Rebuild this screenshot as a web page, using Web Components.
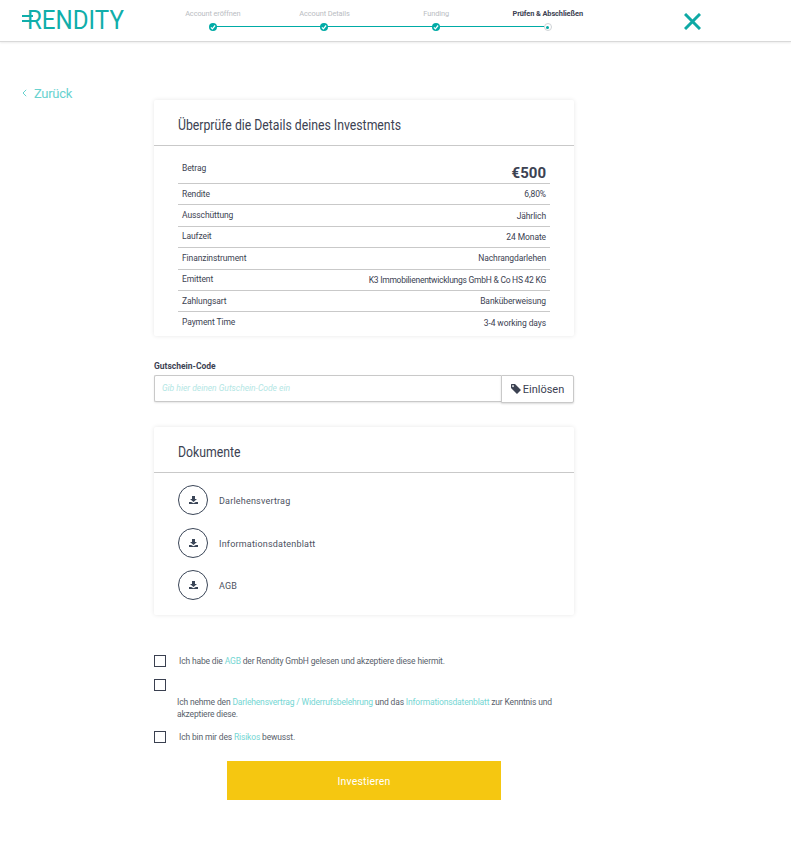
<!DOCTYPE html>
<html lang="de"><head><meta charset="utf-8"><title>Rendity</title>
<style>
html,body{margin:0;padding:0;background:#fff}
body{font-family:Roboto,"Liberation Sans",sans-serif;color:#3c4252;height:842px;overflow:hidden}
</style></head><body>
<rd-header></rd-header>
<rd-main>
  <rd-back>Zurück</rd-back>
  <rd-card heading="Überprüfe die Details deines Investments" pad="table">
    <rd-row label="Betrag" value="€500" big></rd-row>
    <rd-row label="Rendite" value="6,80%"></rd-row>
    <rd-row label="Ausschüttung" value="Jährlich"></rd-row>
    <rd-row label="Laufzeit" value="24 Monate"></rd-row>
    <rd-row label="Finanzinstrument" value="Nachrangdarlehen"></rd-row>
    <rd-row label="Emittent" value="K3 Immobilienentwicklungs GmbH &amp; Co HS 42 KG" tight></rd-row>
    <rd-row label="Zahlungsart" value="Banküberweisung"></rd-row>
    <rd-row label="Payment Time" value="3-4 working days" last></rd-row>
  </rd-card>
  <rd-coupon></rd-coupon>
  <rd-card heading="Dokumente" pad="docs">
    <rd-doc>Darlehensvertrag</rd-doc>
    <rd-doc>Informationsdatenblatt</rd-doc>
    <rd-doc>AGB</rd-doc>
  </rd-card>
  <rd-checks>
    <rd-check>Ich habe die <a>AGB</a> der Rendity GmbH gelesen und akzeptiere diese hiermit.</rd-check>
    <rd-check below>Ich nehme den <a>Darlehensvertrag / Widerrufsbelehrung</a> und das <a>Informationsdatenblatt</a> zur Kenntnis und<br>akzeptiere diese.</rd-check>
    <rd-check>Ich bin mir des <a>Risikos</a> bewusst.</rd-check>
  </rd-checks>
  <rd-cta>Investieren</rd-cta>
</rd-main>
<script>
function def(name, css, html){
  customElements.define(name, class extends HTMLElement{
    connectedCallback(){
      if(this.shadowRoot) return;
      const r=this.attachShadow({mode:'open'});
      r.innerHTML='<style>'+css+'</style>'+(typeof html==='function'?html(this):html);
    }
  });
}
const check='<svg width="6" height="6" viewBox="0 0 10 10"><path d="M1.5 5.5 4 8 8.5 2.5" fill="none" stroke="#fff" stroke-width="2"/></svg>';
def('rd-step',`
:host{display:flex;flex-direction:column;align-items:center;width:111.67px;position:relative;font-size:7.4px;letter-spacing:-.1px;color:#b9bcc2}
:host([active]){color:#3c4252;font-weight:700}
.l{height:9px;line-height:9px;margin-top:9px;white-space:nowrap}
.d{width:8px;height:8px;border-radius:50%;background:#00aba6;margin-top:5px;display:flex;align-items:center;justify-content:center;position:relative;z-index:1;box-sizing:border-box}
:host([active]) .d{background:#fff;border:1px solid #cfd3d6}
.d b{width:3px;height:3px;border-radius:50%;background:#00aba6}
:host(:not([last]))::after{content:"";position:absolute;left:50%;width:100%;top:26px;height:1px;background:#00aba6}
`,h=>`<div class="l"><slot></slot></div><div class="d">${h.hasAttribute('active')?'<b></b>':check}</div>`);
def('rd-header',`
:host{display:flex;height:41px;background:#fff;border-bottom:1px solid #d9d9d9;box-shadow:0 1px 2px rgba(0,0,0,.08);align-items:flex-start;padding-left:22px}
.logo{width:135px;height:41px;position:relative;color:#10aeaa;font-size:25px;font-weight:400;line-height:41px}
.logo span{display:block;margin-left:5px;transform-origin:left;transform:scaleX(.965)}
.logo i{position:absolute;left:0;width:11px;height:2px;background:#10aeaa}
.steps{display:flex;width:447px}
.x{margin:13px 0 0 80px;display:block}
`,`<div class="logo"><span>RENDITY</span><i style="top:15px"></i><i style="top:20px"></i></div>
<div class="steps"><rd-step>Account eröffnen</rd-step><rd-step>Account Details</rd-step><rd-step>Funding</rd-step><rd-step active last>Prüfen &amp; Abschließen</rd-step></div>
<svg class="x" width="17" height="17" viewBox="0 0 17 17"><path d="M1 1 16 16M16 1 1 16" stroke="#0ea9a5" stroke-width="3" fill="none"/></svg>`);
def('rd-main',`:host{display:block;padding-top:44px}`,`<slot></slot>`);
def('rd-back',`
:host{display:flex;align-items:center;height:14px;margin-left:22px;color:#68d2cf;font-size:13px;letter-spacing:-.3px;gap:7px}
`,`<svg width="5" height="8" viewBox="0 0 5 8"><path d="M4.2 .8 1 4l3.2 3.2" fill="none" stroke="#68d2cf" stroke-width="1"/></svg><span><slot></slot></span>`);
def('rd-card',`
:host{display:block;width:420px;margin-left:154px;background:#fff;border-radius:2px;box-shadow:0 0 4px rgba(0,0,0,.1)}
h2{margin:0;line-height:51px;box-sizing:border-box;padding-left:24px;font-size:14px;font-weight:400;color:#3c4252;border-bottom:1px solid #c9c9c9;height:46px}
h2 span{display:inline-block;transform:scaleX(.875);transform-origin:left;white-space:nowrap}
.table{padding:16px 24px 3px}
.docs{padding:12px 0 15px 24px;display:flex;flex-direction:column;gap:12.25px}
`,h=>`<h2><span>${h.getAttribute('heading')}</span></h2><div class="${h.getAttribute('pad')}"><slot></slot></div>`);
def('rd-row',`
:host{display:flex;justify-content:space-between;align-items:center;height:21.4px;padding:0 4px;border-bottom:1px solid #c9c9c9;font-size:8.5px;letter-spacing:-.1px;color:#3c4252;box-sizing:border-box}
:host([big]){height:22px;align-items:flex-start}
:host([last]){border-bottom:0;height:21px}
:host([tight]) .v{letter-spacing:-.25px}
.v.b{font-size:15px;font-weight:700;line-height:20px;margin-top:1px;letter-spacing:0}
.k{line-height:13px}
`,h=>`<span class="k">${h.getAttribute('label')}</span><span class="v ${h.hasAttribute('big')?'b':''}">${h.getAttribute('value').replace('&','&amp;')}</span>`);
def('rd-coupon',`
:host{display:block;width:420px;margin:24px 0 24px 154px}
label{display:block;font-size:8.5px;font-weight:700;color:#3c4252;line-height:12px;margin-bottom:3px}
.f{display:flex;align-items:flex-start}
input{flex:1;min-width:0;height:27px;box-sizing:border-box;border:1px solid #c9c9c9;border-right:0;border-radius:2px 0 0 2px;padding:0 7px 2px;font:italic 8.5px Roboto,sans-serif;box-shadow:0 1px 2px rgba(0,0,0,.1);outline:0}
input::placeholder{color:#b3e6e4;opacity:1}
button{width:73px;height:28px;box-sizing:border-box;background:#fff;border:1px solid #c9c9c9;border-radius:0 2px 2px 0;font:11px Roboto,sans-serif;color:#3c4252;display:flex;align-items:center;justify-content:center;gap:2px;padding:0;box-shadow:0 1px 2px rgba(0,0,0,.15)}
`,`<label>Gutschein-Code</label><div class="f"><input placeholder="Gib hier deinen Gutschein-Code ein"><button><svg width="10" height="10" viewBox="0 0 10 10"><path d="M0 .6A.6.6 0 0 1 .6 0H4l6 6-4 4-6-6ZM2 1.2a.9.9 0 1 0 .01 0Z" fill="#3c4252" fill-rule="evenodd"/></svg>Einlösen</button></div>`);
def('rd-doc',`
:host{display:flex;align-items:center;height:30px;font-size:9px;color:#4c5261;letter-spacing:.2px;gap:11px}
.c{width:30px;height:30px;border-radius:50%;border:1px solid #3a4557;box-sizing:border-box;display:flex;align-items:center;justify-content:center}
span{padding-top:2px}
`,`<div class="c"><svg width="9" height="8" viewBox="0 0 9 8"><path d="M3 0h3v3h2L4.5 6 1 3h2ZM0 6h2.2l2.3 1.2L6.8 6H9v2H0Z" fill="#3a4557"/></svg></div><span><slot></slot></span>`);
def('rd-checks',`:host{display:block;width:400px;margin:40px 0 0 154px}`,`<slot></slot>`);
customElements.define('rd-check',class extends HTMLElement{connectedCallback(){
  if(this.shadowRoot)return;const below=this.hasAttribute('below');
  this.attachShadow({mode:'open'}).innerHTML=`<style>
:host{display:block;font-size:8.5px;letter-spacing:-.16px;color:#5a5f6c;line-height:12px;margin-bottom:12px}
:host([below]){margin-bottom:11px}
.w{display:flex;gap:13px;align-items:flex-start}
.b{width:12px;height:12px;border:1px solid #3a4050;box-sizing:border-box;flex:none}
.u{padding:5px 0 0 23px}
::slotted(a){color:#74d6d3}
</style>${below?`<div class="b"></div><div class="u"><slot></slot></div>`:`<div class="w"><div class="b"></div><div><slot></slot></div></div>`}`;
}});
def('rd-cta',`
:host{display:flex;width:274px;height:39px;box-sizing:border-box;padding-top:2px;margin:18px 0 0 227px;background:#f5c711;color:#fff;font-size:10.5px;align-items:center;justify-content:center;letter-spacing:.2px}
`,`<slot></slot>`);
</script>
</body></html>
